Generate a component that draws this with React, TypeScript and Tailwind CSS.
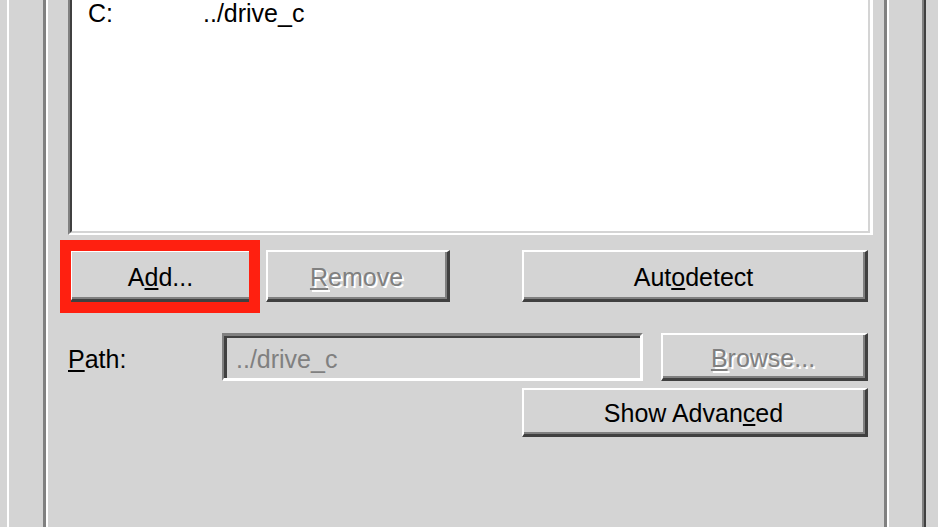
import type { ReactNode } from 'react';

// classic raised push button: white top/left, grey + dark bottom/right
function PushButton({
  className,
  disabled,
  children,
}: {
  className: string;
  disabled?: boolean;
  children: ReactNode;
}) {
  return (
    <div
      className={`border-t-2 border-l-2 border-t-white border-l-white border-r-[3px] border-b-[3px] border-r-[#404040] border-b-[#404040] ${className}`}
    >
      <div className="h-full flex items-center justify-center pt-[5px] border-r-2 border-b-2 border-r-[#808080] border-b-[#808080]">
        <span
          className={
            disabled
              ? 'leading-[25px] text-[#808080] [text-shadow:2px_2px_0_#ffffff]'
              : 'leading-[25px] text-black'
          }
        >
          {children}
        </span>
      </div>
    </div>
  );
}

function Key({ children }: { children: ReactNode }) {
  return <span className="underline decoration-2 underline-offset-[2px]">{children}</span>;
}

export default function App() {
  const drives = [{ letter: 'C:', path: '../drive_c' }];

  return (
    <div className="w-[938px] h-[527px] overflow-hidden bg-[#d4d4d4] font-['Liberation_Sans',Arial,sans-serif] text-[25px] text-black">
      {/* tab page */}
      <div className="ml-[7px] w-[919px] h-full border-l-2 border-l-white border-r-2 border-r-[#404040]">
        <div className="h-full border-r-2 border-r-[#808080] pl-[34px] pr-[33px]">
          {/* etched group box */}
          <div className="h-full border-l-[3px] border-l-[#808080] border-r-2 border-r-white">
            <div className="h-full border-l-2 border-l-white border-r-[3px] border-r-[#808080]">
              {/* drive list */}
              <div className="ml-[20px] w-[805px] border-l-2 border-l-[#808080] border-r-[3px] border-r-white border-b-2 border-b-white">
                <div className="h-[233px] bg-white border-l-2 border-l-[#404040] border-r-2 border-r-[#d4d4d4] border-b-2 border-b-[#d4d4d4] pl-[16px] pt-[1px]">
                  {drives.map((d) => (
                    <div key={d.letter} className="flex leading-[25px]">
                      <span className="w-[115px]">{d.letter}</span>
                      <span>{d.path}</span>
                    </div>
                  ))}
                </div>
              </div>

              {/* add / remove / autodetect */}
              <div className="mt-[15px] flex h-[52px] pl-[22px]">
                <div className="relative">
                  <PushButton className="w-[184px] h-[52px]">
                    A<Key>d</Key>d...
                  </PushButton>
                  <div className="absolute left-[-10px] top-[-10px] w-[200px] h-[73px] border-[11px] border-[#ff2010]" />
                </div>
                <PushButton className="ml-[12px] w-[184px] h-[52px]" disabled>
                  <Key>R</Key>emove
                </PushButton>
                <PushButton className="ml-[72px] w-[346px] h-[52px]">
                  Aut<Key>o</Key>detect
                </PushButton>
              </div>

              {/* path row */}
              <div className="mt-[31px] flex h-[48px] pl-[20px]">
                <div className="w-[154px] flex items-center pt-[4px] leading-[25px]">
                  <Key>P</Key>ath:
                </div>
                <div className="w-[421px] h-[48px] border-t-[3px] border-l-2 border-t-[#808080] border-l-[#808080] border-b-[3px] border-r-[3px] border-b-white border-r-white">
                  <div className="h-full flex items-center pl-[9px] pt-[2px] border-t-2 border-l-[3px] border-t-[#404040] border-l-[#404040] text-[#808080] leading-[25px]">
                    ../drive_c
                  </div>
                </div>
                <PushButton className="ml-[18px] w-[207px] h-[48px]" disabled>
                  <Key>B</Key>rowse...
                </PushButton>
              </div>

              <div className="mt-[7px] pl-[474px]">
                <PushButton className="w-[346px] h-[49px]">
                  Show Advan<Key>c</Key>ed
                </PushButton>
              </div>
            </div>
          </div>
        </div>
      </div>
    </div>
  );
}
